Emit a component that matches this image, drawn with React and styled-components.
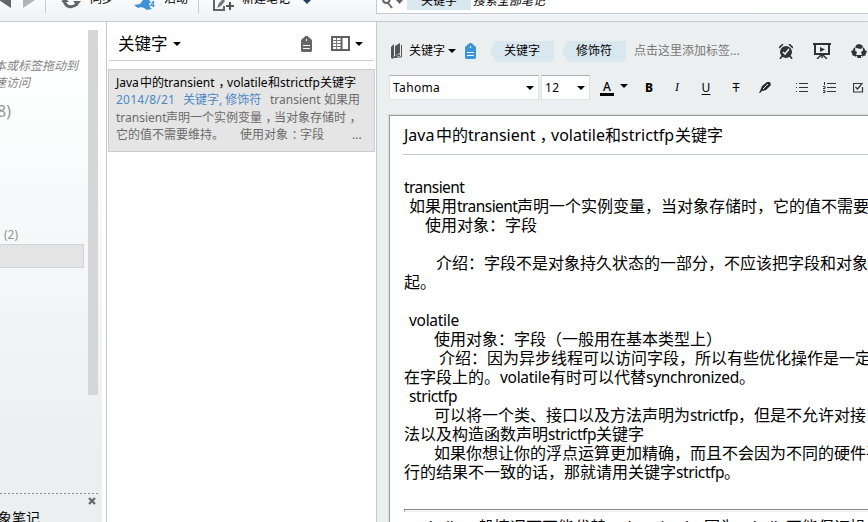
import React from "react";
import styled, { createGlobalStyle } from "styled-components";

const Global = createGlobalStyle`
  * { box-sizing: border-box; }
  body { margin: 0; overflow: hidden; background: #fff; }
`;

const Page = styled.div`
  width: 868px;
  height: 522px;
  overflow: hidden;
  display: flex;
  flex-direction: column;
  font: 12px/16px "Noto Sans", "Noto Sans CJK SC", sans-serif;
  color: #000;
  white-space: nowrap;
`;

const TopBar = styled.header`
  height: 22px;
  flex: none;
  display: flex;
  align-items: flex-start;
  border-bottom: 1px solid #c4c9cd;
  background: linear-gradient(#f9fbfc, #edf2f6);
`;

const BarArt = styled.svg`
  flex: none;
  display: block;
  width: ${(p) => p.$w}px;
  height: 21px;
`;

const BarText = styled.span`
  flex: none;
  width: ${(p) => p.$w}px;
  margin-top: -9px;
  line-height: 16px;
`;

const SearchBox = styled.div`
  flex: 1;
  height: 14px;
  display: flex;
  background: #fff;
  border-left: 1px solid #c4c9cd;
  border-bottom: 1px solid #c4c9cd;
`;

const SearchTag = styled.span`
  width: 64px;
  height: 10px;
  margin-left: 4px;
  background: #d9e7ef;
  text-align: center;
  line-height: 2px;
`;

const SearchHint = styled.span`
  margin: -7px 0 0 2px;
  font-style: italic;
  line-height: 16px;
`;

const Columns = styled.div`
  flex: 1;
  min-height: 0;
  display: grid;
  grid-template-columns: 106px 271px 1fr;
`;

const Sidebar = styled.aside`
  display: flex;
  min-width: 0;
  overflow: hidden;
  flex-direction: column;
  width: 102px;
  background: linear-gradient(#fff 0, #fcfdfd 90px, #f2f4f6 300px, #ebeff0 440px);
`;

const SideScroll = styled.div`
  display: flex;
  height: 471px;
  justify-content: space-between;
`;

const SideItems = styled.div`
  width: 84px;
  padding-top: 35px;
`;

const DragHint = styled.p`
  margin: 0 0 0 -6px;
  color: #858585;
  font-style: italic;
  line-height: 17px;
`;

const Count = styled.div`
  height: ${(p) => p.$h}px;
  margin: ${(p) => p.$m};
  color: #959595;
  font-size: ${(p) => p.$size}px;
  line-height: ${(p) => p.$h}px;
`;

const SelectedRow = styled.div`
  height: 24px;
  background: #e4e4e4;
  border: 1px solid #d2d4d5;
  border-left: 0;
`;

const Thumb = styled.div`
  width: 10px;
  height: 365px;
  margin: 8px 4px 0 0;
  background: #d6d6d6;
`;

const SideFooter = styled.div`
  width: 99px;
  height: 29px;
  background: repeating-linear-gradient(90deg, #8c9091 0 2px, transparent 2px 4px) 0 0 / 100% 1px no-repeat;
`;

const CloseIcon = styled.svg`
  display: block;
  width: 8px;
  height: 8px;
  margin-left: 88px;
  transform: translateY(4px);
`;

const FooterTitle = styled.div`
  margin: 8px 0 0 -2px;
  font-size: 14px;
  line-height: 18px;
`;

const NoteList = styled.section`
  border-left: 1px solid #c8c8c8;
  border-right: 1px solid #c4c9cd;
  background: #fff;
`;

const ListHeader = styled.div`
  height: 39px;
  margin: 0 2px;
  padding: 5px 12px 0 9px;
  border-bottom: 1px solid #ccc;
  display: flex;
  align-items: center;
`;

const ListTitle = styled.h2`
  margin: 0;
  font-size: 16.5px;
  font-weight: 400;
`;

const Icon = styled.svg`
  flex: none;
  display: block;
  width: ${(p) => p.$w}px;
  height: ${(p) => p.$h}px;
  margin-left: ${(p) => p.$ml || 0}px;
`;

const NoteCard = styled.article`
  height: 83px;
  margin: 8px 1px 0;
  padding: 4px 0 0 7px;
  border: 1px solid #ccc;
  background: #e5e5e5;
  color: #6a6a6a;
`;

const CardLine = styled.div`
  height: 17.3px;
  line-height: 17px;
  display: flex;
  color: ${(p) => p.$color || "inherit"};
`;

const Run = styled.span`
  flex: none;
  display: inline-block;
  width: ${(p) => p.$w}px;
  letter-spacing: ${(p) => p.$ls || 0}px;
  color: ${(p) => p.$color || "inherit"};
`;

const WordRun = styled(Run)`
  font-size: 15.5px;
`;

const WidePunct = styled.span`
  flex: none;
  display: inline-block;
  transform: translateX(0.28em);
`;

const Editor = styled.main`
  min-width: 0;
  overflow: hidden;
  background: #ebeff0;
  padding-left: 12px;
`;

const TagBar = styled.div`
  height: 53px;
  padding: 5px 0 0 2px;
  display: flex;
  align-items: center;
`;

const Tag = styled.span`
  flex: none;
  width: 64px;
  height: 21px;
  margin-left: ${(p) => p.$ml}px;
  background: #d9e7ef;
  clip-path: polygon(5px 0, 100% 0, 100% 100%, 5px 100%, 0 50%);
  line-height: 20px;
  text-align: center;
`;

const NotebookName = styled.span`
  margin-left: 6px;
  width: 36px;
`;

const AddTag = styled.span`
  width: 106px;
  margin-left: 8px;
  color: #777;
`;

const FormatBar = styled.div`
  height: 40px;
  display: flex;
  align-items: flex-start;
`;

const Select = styled.div`
  flex: none;
  display: flex;
  align-items: center;
  justify-content: space-between;
  width: ${(p) => p.$w}px;
  height: 25px;
  margin-right: 2px;
  padding: 0 4px 0 3px;
  border: 1px solid #dfe2e8;
  border-top-color: #abadb3;
  border-radius: 1px;
  background: #fff;
  letter-spacing: 0.35px;
`;

const Tool = styled.span`
  flex: none;
  width: ${(p) => p.$w}px;
  height: 25px;
  margin-left: ${(p) => p.$ml || 0}px;
  text-align: center;
  line-height: 25px;
  font-family: ${(p) => p.$font || '"Noto Sans"'}, sans-serif;
  font-weight: ${(p) => p.$weight || 400};
  font-style: ${(p) => (p.$italic ? "italic" : "normal")};
  text-decoration: ${(p) => p.$deco || "none"};
  text-underline-offset: 2px;
`;

const ColorTool = styled(Tool)`
  height: 21px;
  line-height: 24px;
  border-bottom: 3px solid #000;
`;

const Paper = styled.div`
  height: 420px;
  border-left: 1px solid #999da0;
  border-top: 1px solid #999da0;
  box-shadow: 0 0 0 1px #dcdfe0;
  background: #fff;
  padding-left: 14px;
  font-size: 16px;
`;

const Title = styled.h1`
  height: 39px;
  margin: 0 0 0 -1px;
  padding-left: 1px;
  border-bottom: 1px solid #c3c9d0;
  font-size: 16px;
  font-weight: 400;
  line-height: 38px;
`;

const Body = styled.div`
  padding-top: 23px;
`;

const Line = styled.p`
  display: flex;
  height: 19px;
  margin: 0;
  padding-left: ${(p) => p.$indent || 0}px;
  line-height: 19px;
`;

const Rule = styled.div`
  height: 3px;
  margin: 27px 0 6px;
  border-top: 1px solid #888;
  border-left: 1px solid #888;
  border-bottom: 1px solid #f0f0f0;
`;

const Caret = ({ ml }) => (
  <Icon $w={8} $h={4} $ml={ml} viewBox="0 0 8 4"><path d="M0 0h8L4 4z" /></Icon>
);

const TagIcon = ({ color, ml }) => (
  <Icon $w={11} $h={16} $ml={ml} viewBox="0 0 11 16">
    <path d="M4.500 0h2L11 4v11l-1 1H1l-1-1V4z" fill={color} />
    <path d="M5 3h1v2H5zM2 9h7v1H2zM2 12h7v1H2z" fill="#fff" />
  </Icon>
);

const words = {
  transient: [60, -0.55],
  volatile: [50, -0.3],
  strictfp: [48, -0.4],
  sychronized: [82, -0.4],
  synchronized: [93, -0.3],
};
const Word = ({ children }) => (
  <WordRun $w={words[children][0]} $ls={words[children][1]}>{children}</WordRun>
);

export default function App() {
  return (
    <Page>
      <Global />
      <TopBar>
        <BarArt $w={90} viewBox="0 0 90 21">
          <path d="M-1 0L11-8V8z" fill="#666" />
          <path d="M35 0L23-8V8z" fill="#b3b3b3" />
          <path d="M45.500 0v13" stroke="#c9cdd0" />
          <path d="M64 0c1 7 8 9 13 4" fill="none" stroke="#656565" strokeWidth="3" />
          <path d="M61 2l4-4 4 4zM73 1h8l-4 5z" fill="#656565" />
        </BarArt>
        <BarText $w={44}>同步</BarText>
        <BarArt $w={30} viewBox="134 0 30 21">
          <path d="M134 5l6-1 3-4h6l2 2-2 2 1 3 2 2-5 1-3-2-3-1-3 1z" fill="#3c95d8" />
          <text x="150" y="7" fontSize="8" fontWeight="700" fill="#4289bd">4</text>
        </BarArt>
        <BarText $w={34}>活动</BarText>
        <BarArt $w={44} viewBox="198 0 44 21">
          <path d="M198.500 0v13" stroke="#c9cdd0" />
          <path d="M214 0v10h10V6" fill="none" stroke="#646464" strokeWidth="2" />
          <path d="M217 8l2-5 4-4 2 2-4 5z" fill="#777" />
          <path d="M226 6h8M230 2v8" stroke="#555" strokeWidth="2" />
        </BarArt>
        <BarText $w={61}>新建笔记</BarText>
        <BarArt $w={73} viewBox="303 0 73 21"><path d="M303 0h8l-4 4z" fill="#24426f" /></BarArt>
        <SearchBox>
          <Icon $w={21} $h={13} $ml={5} viewBox="382 0 21 13">
            <path d="M383 0c1 4 5 4 7 0M388 3l4 5" fill="none" stroke="#666" strokeWidth="2" />
            <path d="M396 0h7l-3.500 4z" fill="#666" />
          </Icon>
          <SearchTag>关键字</SearchTag>
          <SearchHint>搜索全部笔记</SearchHint>
        </SearchBox>
      </TopBar>
      <Columns>
        <Sidebar>
          <SideScroll>
            <SideItems>
              <DragHint>本或标签拖动到</DragHint>
              <DragHint>速访问</DragHint>
              <Count $h={20} $size={16} $m="10px 0 0 -3px">8)</Count>
              <Count $h={16} $size={12} $m="106px 0 1px 4px">(2)</Count>
              <SelectedRow />
            </SideItems>
            <Thumb />
          </SideScroll>
          <SideFooter>
            <CloseIcon viewBox="0 0 8 8"><path d="M1 1l6 6M7 1L1 7" stroke="#666" strokeWidth="2.200" /></CloseIcon>
            <FooterTitle>象笔记</FooterTitle>
          </SideFooter>
        </Sidebar>
        <NoteList>
          <ListHeader>
            <ListTitle>关键字</ListTitle>
            <Caret ml={5} />
            <TagIcon color="#656565" ml={120} />
            <Icon $w={19} $h={15} $ml={19} viewBox="0 0 19 15">
              <path d="M1 1h17v13H1zM10.500 1v13" fill="none" stroke="#606060" strokeWidth="2" />
              <path d="M2 4.500h8M2 7.500h8M2 10.500h8M5.500 2v11" stroke="#777" />
            </Icon>
            <Caret ml={5} />
          </ListHeader>
          <NoteCard>
            <CardLine $color="#000">
              <Run $w={24}>Java</Run>中的<Run $w={51}>transient</Run><WidePunct>，</WidePunct>
              <Run $w={41}>volatile</Run>和<Run $w={40}>strictfp</Run>关键字
            </CardLine>
            <CardLine>
              <Run $w={67} $ls={0.25} $color="#4c88c6">2014/8/21</Run>
              <Run $w={87} $color="#4c88c6">关键字, 修饰符</Run>
              <Run $w={54}>transient</Run>如果用
            </CardLine>
            <CardLine>
              <Run $w={50}>transient</Run>声明一个实例变量<WidePunct>，</WidePunct>当对象存储时<WidePunct>，</WidePunct>
            </CardLine>
            <CardLine>
              <Run $w={124}>它的值不需要维持。</Run>使用对象<WidePunct>：</WidePunct><Run $w={52}>字段</Run>...
            </CardLine>
          </NoteCard>
        </NoteList>
        <Editor>
          <TagBar>
            <Icon $w={12} $h={16} viewBox="0 0 12 16">
              <path d="M0 4l3-3v12l-1 3-2-1z" fill="#555" />
              <path d="M4 3l5-3v10l-5 3z" fill="#555" />
              <path d="M10.500 2v12H3" fill="none" stroke="#555" />
              <path d="M4 13l5-2v2H6v2H2z" fill="#555" />
            </Icon>
            <NotebookName>关键字</NotebookName>
            <Caret ml={3} />
            <TagIcon color="#3c95dd" ml={9} />
            <Tag $ml={14}>关键字</Tag>
            <Tag $ml={8}>修饰符</Tag>
            <AddTag>点击这里添加标签...</AddTag>
            <Icon $w={14} $h={15} $ml={39} viewBox="0 0 14 15">
              <circle cx="7" cy="8" r="6" fill="#303336" />
              <path d="M0 4l4-4M14 4l-4-4M3 12l-2 3M11 12l2 3" stroke="#303336" strokeWidth="1.600" />
              <path d="M4 8l2 2 4-5" fill="none" stroke="#edf0f1" strokeWidth="1.600" />
            </Icon>
            <Icon $w={18} $h={16} $ml={20} viewBox="0 0 18 16">
              <path d="M0 1h18M2 1v10h14V1" fill="none" stroke="#303336" strokeWidth="2" />
              <path d="M7 4l5 2.500L7 9z" fill="#303336" />
              <path d="M9 11v4M8 12l-4 4M10 12l4 4" stroke="#303336" strokeWidth="1.500" />
            </Icon>
            <Icon $w={16} $h={15} $ml={20} viewBox="0 0 16 15">
              <circle cx="8" cy="7.500" r="5.200" fill="none" stroke="#303336" strokeWidth="2" />
              <path d="M5 1l3-1 3 1 1 3-3 1-3-1zM0 7l3-1 3 2-1 3-3 1zM16 7l-3-1-3 2 1 3 3 1zM6 11h5l-1 3H7z" fill="#303336" />
              <path d="M3 2l2 3M13 2l-2 3M4 14l2-2M12 14l-2-2" stroke="#ebeff0" />
            </Icon>
          </TagBar>
          <FormatBar>
            <Select $w={150}>Tahoma<Caret /></Select>
            <Select $w={49}>12<Caret /></Select>
            <ColorTool $w={14} $ml={8} $weight={500}>A</ColorTool>
            <Icon $w={8} $h={14} $ml={6} viewBox="0 0 8 14"><path d="M0 9h8l-4 4z" /></Icon>
            <Tool $w={20} $ml={11} $weight={800}>B</Tool>
            <Tool $w={20} $ml={8} $italic $font='"Liberation Serif"'>I</Tool>
            <Tool $w={20} $ml={9} $deco="underline">U</Tool>
            <Tool $w={20} $ml={10} $deco="line-through">T</Tool>
            <Icon $w={12} $h={25} $ml={13} viewBox="0 0 12 25">
              <path d="M1 16l2-5 5-4h3l1 3-5 5-4 1-2 2H0z" fill="#292929" />
              <path d="M4 14l5-5" stroke="#ebeff0" />
            </Icon>
            <Icon $w={13} $h={25} $ml={24} viewBox="0 0 13 25">
              <path d="M1 8.500h1M1 12.500h1M1 16.500h1M4 8.500h9M4 12.500h9M4 16.500h9" stroke="#333" />
            </Icon>
            <Icon $w={13} $h={25} $ml={15} viewBox="0 0 13 25">
              <path d="M4 8.500h9M4 12.500h9M4 16.500h9M1.500 7v3M0 11.500h2v2H0M0 15.500h2v2H0" fill="none" stroke="#333" />
            </Icon>
            <Icon $w={11} $h={25} $ml={17} viewBox="0 0 11 25">
              <path d="M9.500 12v5h-9V8.500H8M2.500 12l2 2 5-6" fill="none" stroke="#333" strokeWidth="1.200" />
            </Icon>
          </FormatBar>
          <Paper>
            <Title>
              <Run $w={32}>Java</Run>中的<Run $w={67}>transient</Run><WidePunct>，</WidePunct><Run $w={54}>volatile</Run>和<Run $w={54}>strictfp</Run>关键字
            </Title>
            <Body>
              <Line><Word>transient</Word></Line>
              <Line $indent={5}>如果用<Word>transient</Word>声明一个实例变量，当对象存储时，它的值不需要维持。</Line>
              <Line $indent={21}>使用对象：字段</Line>
              <Line />
              <Line $indent={32}>介绍：字段不是对象持久状态的一部分，不应该把字段和对象</Line>
              <Line>起。</Line>
              <Line />
              <Line $indent={5}><Word>volatile</Word></Line>
              <Line $indent={30}>使用对象：字段（一般用在基本类型上）</Line>
              <Line $indent={35}>介绍：因为异步线程可以访问字段，所以有些优化操作是一定</Line>
              <Line>在字段上的。<Word>volatile</Word>有时可以代替<Word>synchronized</Word>。</Line>
              <Line $indent={5}><Word>strictfp</Word></Line>
              <Line $indent={30}>可以将一个类、接口以及方法声明为<Word>strictfp</Word>，但是不允许对接</Line>
              <Line>法以及构造函数声明<Word>strictfp</Word>关键字</Line>
              <Line $indent={30}>如果你想让你的浮点运算更加精确，而且不会因为不同的硬件平</Line>
              <Line>行的结果不一致的话，那就请用关键字<Word>strictfp</Word>。</Line>
              <Rule />
              <Line $indent={8}>
                <Word>volatile</Word>一般情况下不能代替<Word>sychronized</Word>，因为<Word>volatile</Word>不能保证操
              </Line>
            </Body>
          </Paper>
        </Editor>
      </Columns>
    </Page>
  );
}
